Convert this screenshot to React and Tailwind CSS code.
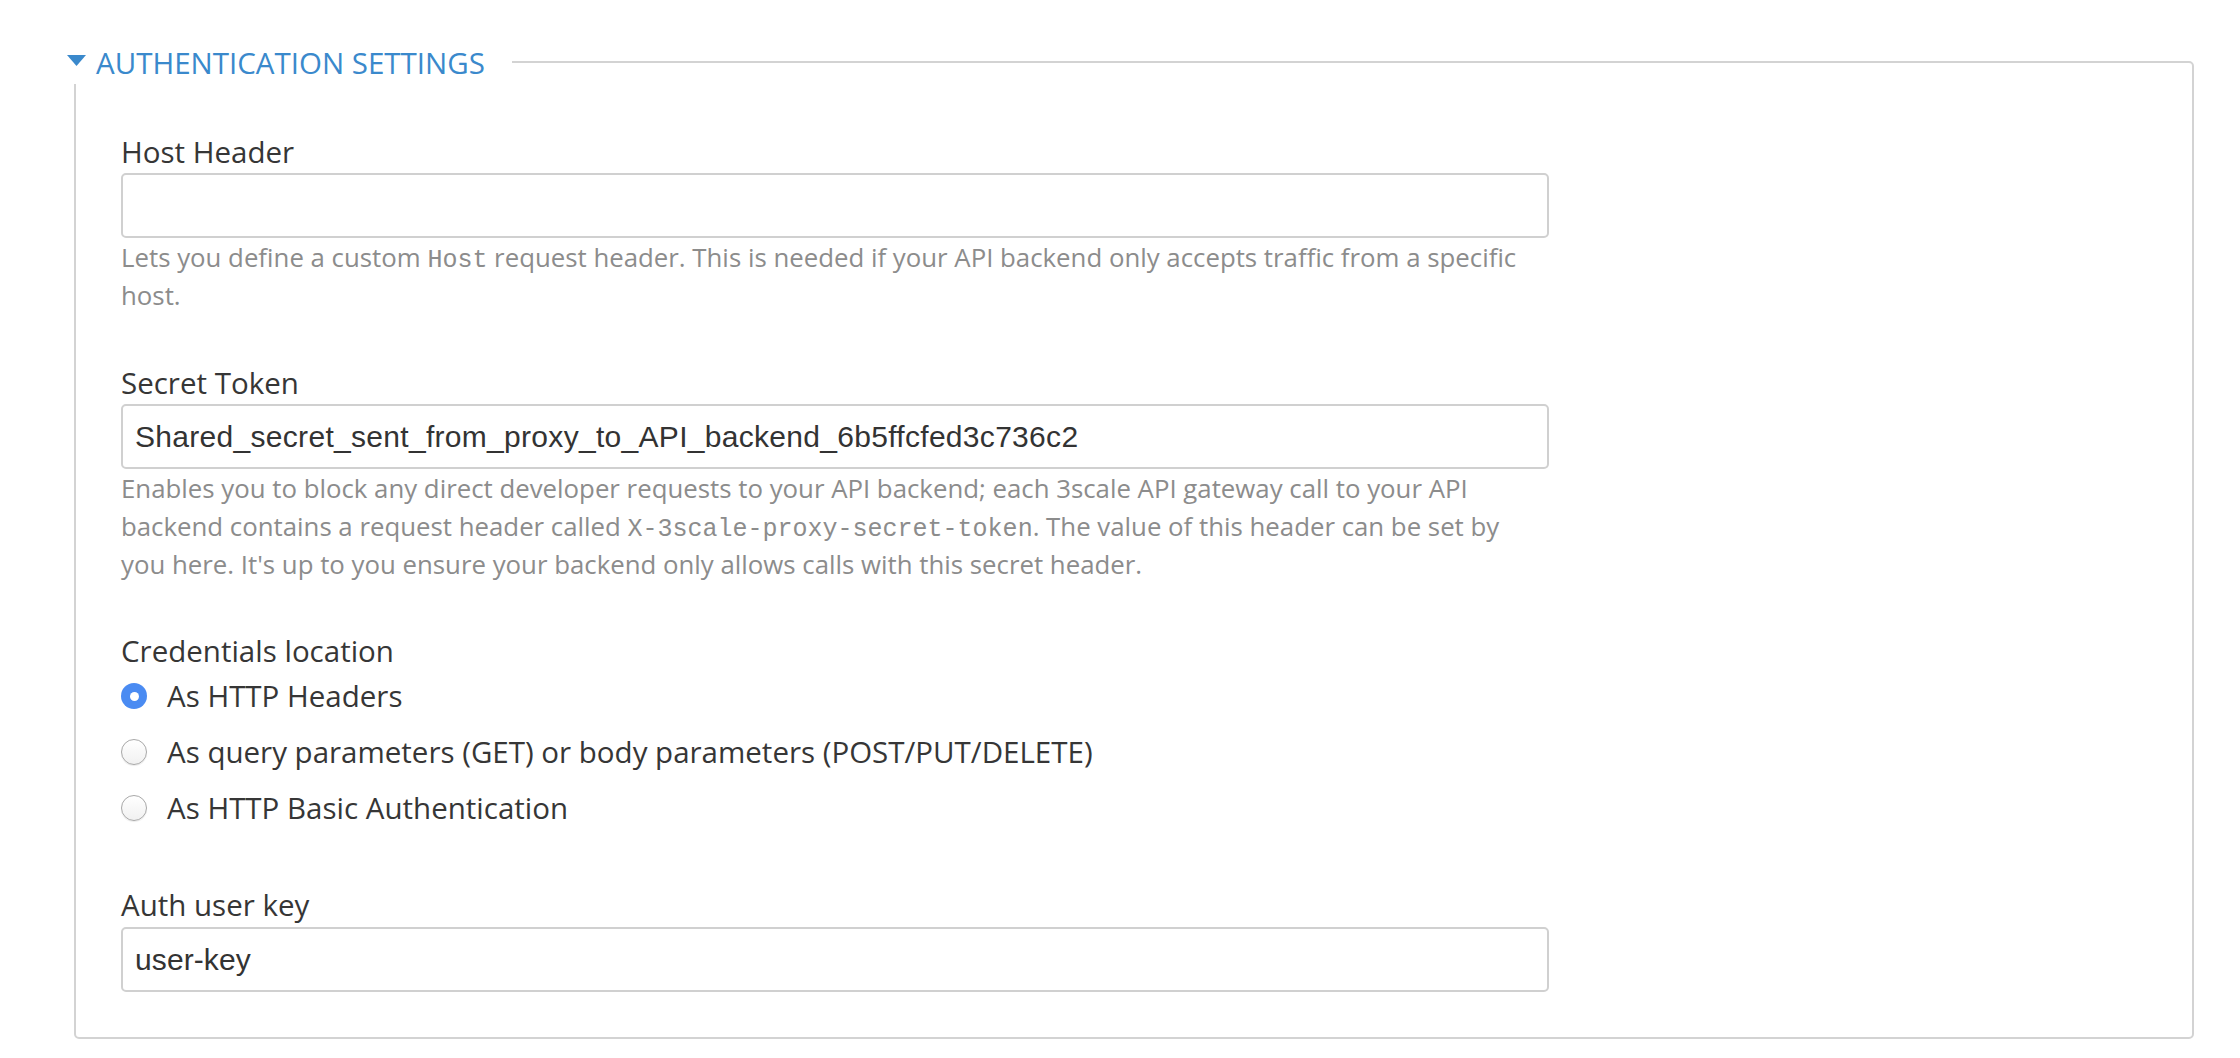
export default function App() {
  const label = "block text-[29.5px] leading-[40px] text-[#363636]";
  const help = "text-[25.8px] leading-[38px] text-[#8c8c8c]";
  const code = "font-['Liberation_Mono',monospace] text-[25px] leading-none";
  const input =
    "mt-[1px] flex h-[65px] w-full items-center rounded-[5px] border-2 border-[#d0d0d0] bg-white pl-[12px] font-['Liberation_Sans',Arial,sans-serif] text-[30px] tracking-[0.3px] text-[#333333]";

  const Radio = ({ checked, children }) => (
    <div className="flex h-[50px] items-center gap-[20px]">
      {checked ? (
        <span className="flex h-[26px] w-[26px] items-center justify-center rounded-full bg-[#4a8bf2]">
          <span className="h-[9px] w-[9px] rounded-full bg-white" />
        </span>
      ) : (
        <span className="h-[26px] w-[26px] rounded-full border border-[#a8a8a8] bg-gradient-to-b from-white to-[#f1f1f1] shadow-[0_1px_1px_rgba(0,0,0,0.08)]" />
      )}
      <span className="text-[29.5px] leading-[40px] text-[#363636]">{children}</span>
    </div>
  );

  return (
    <div className="min-h-screen bg-white pt-[61px] pl-[74px] pr-[46px] font-['Open_Sans',sans-serif]">
      <div className="relative rounded-[5px] border-2 border-[#d3d3d3] pl-[45px] pt-[69px] pb-[45px]">
        <div className="absolute left-[-18px] top-[-21px] flex h-[42px] w-[454px] items-center bg-white pl-[9px]">
          <svg width="19" height="11" viewBox="0 0 19 11" className="mb-[5px]">
            <path d="M0 0H19L9.5 11Z" fill="#3a89cc" />
          </svg>
          <span className="ml-[10px] text-[29.5px] leading-none text-[#3a89cc]">AUTHENTICATION SETTINGS</span>
        </div>

        <div className="w-[1428px]">
          <label className={label}>Host Header</label>
          <div className={input}></div>
          <p className={help}>
            Lets you define a custom <code className={code}>Host</code> request header. This is needed if your API backend only accepts traffic from a specific
            <br />
            host.
          </p>

          <label className={label + " mt-[49px]"}>Secret Token</label>
          <div className={input}>Shared_secret_sent_from_proxy_to_API_backend_6b5ffcfed3c736c2</div>
          <p className={help}>
            Enables you to block any direct developer requests to your API backend; each 3scale API gateway call to your API
            <br />
            backend contains a request header called <code className={code}>X-3scale-proxy-secret-token</code>. The value of this header can be set by
            <br />
            you here. It's up to you ensure your backend only allows calls with this secret header.
          </p>

          <label className={label + " mt-[48px]"}>Credentials location</label>
          <div className="flex flex-col gap-[6px]">
            <Radio checked>As HTTP Headers</Radio>
            <Radio>As query parameters (GET) or body parameters (POST/PUT/DELETE)</Radio>
            <Radio>As HTTP Basic Authentication</Radio>
          </div>

          <label className={label + " mt-[52px]"}>Auth user key</label>
          <div className={input.replace("mt-[1px]", "mt-[2px]").replace("tracking-[0.3px]", "tracking-[0.1px]")}>user-key</div>
        </div>
      </div>
    </div>
  );
}
